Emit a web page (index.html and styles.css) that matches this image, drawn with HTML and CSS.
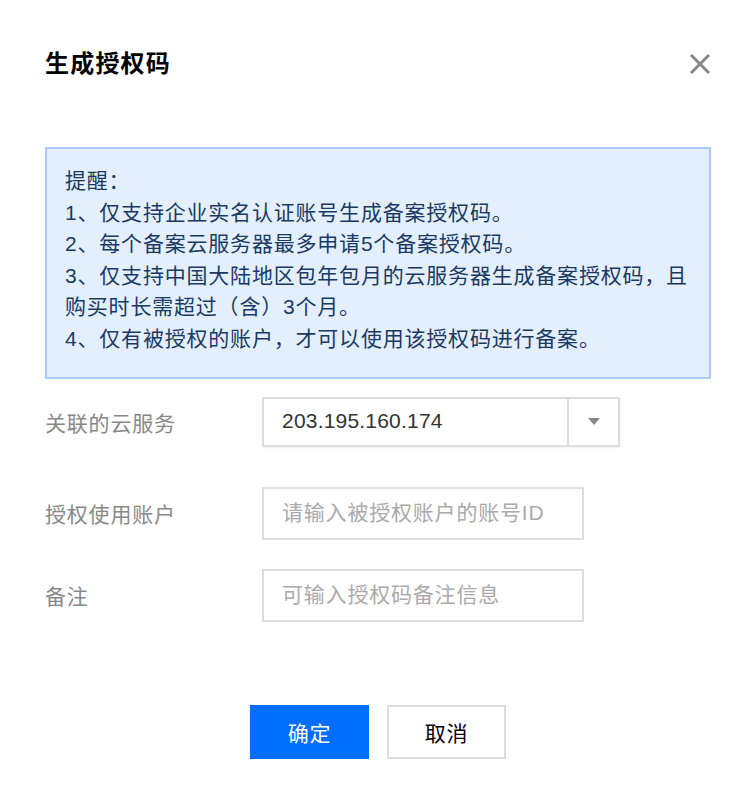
FILE: index.html
```html
<!DOCTYPE html>
<html lang="zh-CN">
<head>
  <meta charset="UTF-8" />
  <title>生成授权码</title>
  <link rel="stylesheet" href="styles.css">
</head>
<body>

  <div class="dialog">
    <div class="dialog-head">
      <h3 class="dialog-title">生成授权码</h3>
      <button class="close-btn" title="关闭">
        <svg width="22" height="22" viewBox="0 0 22 22">
          <path d="M2 2 L20 20 M20 2 L2 20" stroke="#888" stroke-width="3" fill="none" />
        </svg>
      </button>
    </div>

    <div class="notice">
      <p>提醒：</p>
      <p>1、仅支持企业实名认证账号生成备案授权码。</p>
      <p>2、每个备案云服务器最多申请5个备案授权码。</p>
      <p>3、仅支持中国大陆地区包年包月的云服务器生成备案授权码，且购买时长需超过（含）3个月。</p>
      <p>4、仅有被授权的账户，才可以使用该授权码进行备案。</p>
    </div>

    <div class="form">
      <div class="form-row row-select">
        <label class="form-label">关联的云服务</label>
        <div class="select">
          <span class="select-value">203.195.160.174</span>
          <span class="select-arrow"><i class="caret"></i></span>
        </div>
      </div>

      <div class="form-row row-account">
        <label class="form-label">授权使用账户</label>
        <input type="text" class="text-input" placeholder="请输入被授权账户的账号ID" />
      </div>

      <div class="form-row row-remark">
        <label class="form-label">备注</label>
        <input type="text" class="text-input" placeholder="可输入授权码备注信息" />
      </div>
    </div>

    <div class="dialog-foot">
      <button class="btn btn-primary">确定</button>
      <button class="btn btn-default">取消</button>
    </div>
  </div>

</body>
</html>
```

FILE: styles.css
```css
body {
  margin: 0;
  background-color: #fff;
  font-family: "Liberation Sans", "Noto Sans CJK SC", sans-serif;
  color: #000;
}

.dialog {
  width: 666px;
  padding: 46px 28px 0 45px;
}

.dialog-head {
  display: flex;
  justify-content: space-between;
  align-items: center;
  height: 36px;
}

.dialog-title {
  margin: 0;
  font-size: 24px;
  font-weight: bold;
  letter-spacing: 1.2px;
  line-height: 36px;
}

.close-btn {
  border: none;
  background: none;
  padding: 0;
  width: 22px;
  height: 22px;
  cursor: pointer;
  display: flex;
}

.notice {
  margin-top: 65px;
  background-color: #e4effd;
  border: 2px solid #a5cdf8;
  padding: 16px 18px 22px 18px;
  font-size: 21px;
  letter-spacing: 0.8px;
  line-height: 31.6px;
  color: #1a3a63;
}

.notice p {
  margin: 0;
}

.form {
  margin-top: 18px;
}

.form-row {
  display: flex;
  align-items: center;
}

.form-label {
  width: 217px;
  font-size: 21px;
  letter-spacing: 0.8px;
  color: #888;
}

.row-account {
  margin-top: 40px;
}

.row-remark {
  margin-top: 29px;
}

.select {
  width: 354px;
  height: 46px;
  border: 2px solid #ddd;
  display: flex;
  align-items: stretch;
  box-shadow: 0 1px 2px rgba(0,0,0,0.06);
}

.select-value {
  flex: 1;
  display: flex;
  align-items: center;
  padding-left: 18px;
  padding-bottom: 2px;
  font-size: 21px;
  letter-spacing: 0.2px;
  color: #333;
}

.select-arrow {
  width: 49px;
  border-left: 2px solid #ddd;
  display: flex;
  justify-content: center;
  align-items: center;
}

.caret {
  width: 0;
  height: 0;
  border-left: 6px solid transparent;
  border-right: 6px solid transparent;
  border-top: 7px solid #888;
}

.text-input {
  width: 322px;
  height: 53px;
  box-sizing: border-box;
  border: 2px solid #ddd;
  padding: 0 18px;
  font-family: "Liberation Sans", "Noto Sans CJK SC", sans-serif;
  font-size: 21px;
  letter-spacing: 0.8px;
  color: #333;
  outline: none;
}

.text-input::placeholder {
  color: #aaa;
}

.dialog-foot {
  margin-top: 83px;
  display: flex;
  justify-content: center;
  gap: 18px;
}

.btn {
  width: 119px;
  height: 54px;
  font-family: "Liberation Sans", "Noto Sans CJK SC", sans-serif;
  font-size: 21px;
  letter-spacing: 0.8px;
  cursor: pointer;
  box-sizing: border-box;
}

.btn-primary {
  background-color: #006eff;
  color: #fff;
  border: none;
}

.btn-default {
  background-color: #fff;
  color: #000;
  border: 2px solid #ddd;
}
```
